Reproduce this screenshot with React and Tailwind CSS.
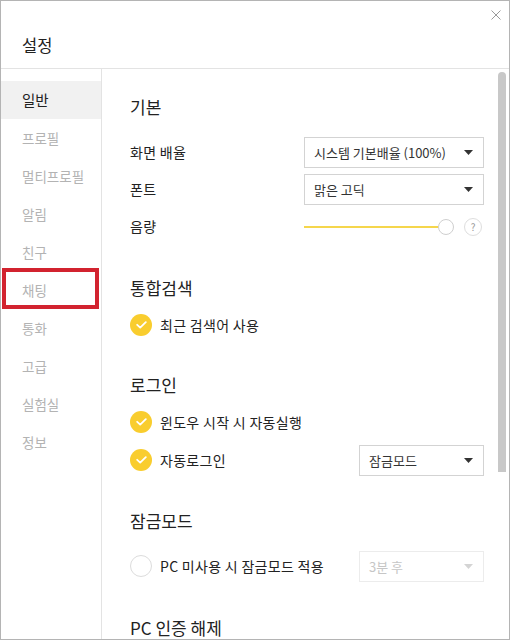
import React from 'react';

const menu = ['일반', '프로필', '멀티프로필', '알림', '친구', '채팅', '통화', '고급', '실험실', '정보'];

const Caret = ({ disabled }) => (
  <svg width="9" height="5" viewBox="0 0 9 5" className="shrink-0">
    <path d="M0 0 L9 0 L4.5 5 Z" fill={disabled ? '#d4d4d4' : '#333333'} />
  </svg>
);

const Select = ({ label, width, disabled }) => (
  <div
    className={`h-[31px] flex items-center justify-between pl-[9px] pr-[10px] border bg-white ${width} ${
      disabled ? 'border-[#ececec] text-[#c6c6c6]' : 'border-[#d3d3d3] text-[#333]'
    }`}
  >
    <span className="text-[13px] leading-none">{label}</span>
    <Caret disabled={disabled} />
  </div>
);

const Check = ({ on }) =>
  on ? (
    <div className="w-[22px] h-[22px] rounded-full bg-[#f9cd2e] flex items-center justify-center shrink-0">
      <svg width="11" height="8" viewBox="0 0 11 8">
        <path d="M1.2 3.8 L4.2 6.6 L9.8 1.2" fill="none" stroke="#ffffff" strokeWidth="1.8" strokeLinecap="round" strokeLinejoin="round" />
      </svg>
    </div>
  ) : (
    <div className="w-[22px] h-[22px] rounded-full border border-[#dcdcdc] bg-white shrink-0" />
  );

const Heading = ({ children, className = '' }) => (
  <div className={`h-[36px] flex items-center text-[17px] text-[#222] ${className}`}>{children}</div>
);

const Label = ({ children }) => (
  <span className="text-[14px] tracking-[0.3px] text-[#222]">{children}</span>
);

const CheckRow = ({ on, label, children }) => (
  <div className="h-[38px] flex items-center justify-between">
    <div className="flex items-center gap-[8px]">
      <Check on={on} />
      <Label>{label}</Label>
    </div>
    {children}
  </div>
);

export default function App() {
  return (
    <div
      className="w-[510px] h-[640px] bg-white border border-[#b4b4b4] flex flex-col overflow-hidden relative"
      style={{ fontFamily: '"Noto Sans CJK KR", "Noto Sans", sans-serif' }}
    >
      <div className="h-[68px] shrink-0 border-b border-[#e3e3e3] flex items-center pl-[21px] pt-[22px]">
        <span className="text-[16.5px] text-[#222]">설정</span>
      </div>
      <button className="absolute top-[9px] right-[8px] w-[10px] h-[10px]">
        <svg width="10" height="10" viewBox="0 0 10 10">
          <path d="M0.5 0.5 L9.5 9.5 M9.5 0.5 L0.5 9.5" stroke="#9a9a9a" strokeWidth="1" />
        </svg>
      </button>

      <div className="flex flex-1 min-h-0">
        <div className="w-[101px] shrink-0 border-r border-[#e3e3e3] pt-[12px]">
          {menu.map((m, i) => (
            <div
              key={m}
              className={`relative h-[38px] flex items-center pl-[21px] text-[13.5px] ${
                i === 0 ? 'bg-[#f1f1f1] text-[#222] text-[14.5px]' : 'text-[#b3b3b3]'
              }`}
            >
              {m}
              {m === '채팅' && (
                <div className="absolute left-[1px] top-[-3px] w-[97px] h-[41px] border-[4px] border-[#d2232f]" />
              )}
            </div>
          ))}
        </div>

        <div className="flex-1 flex min-w-0">
          <div className="flex-1 pl-[28px] pr-[9px] pt-[20px]">
            <Heading className="mb-[9px]">기본</Heading>
            <div className="h-[37px] flex items-center justify-between">
              <Label>화면 배율</Label>
              <Select label="시스템 기본배율 (100%)" width="w-[180px]" />
            </div>
            <div className="h-[37px] flex items-center justify-between">
              <Label>폰트</Label>
              <Select label="맑은 고딕" width="w-[180px]" />
            </div>
            <div className="h-[37px] flex items-center justify-between">
              <Label>음량</Label>
              <div className="w-[180px] flex items-center">
                <div className="w-[135px] h-[2px] bg-[#f5d64c]" />
                <div className="w-[16px] h-[16px] rounded-full border border-[#cfcfcf] bg-white -ml-[1px]" />
                <div className="ml-[10px] w-[18px] h-[18px] rounded-full border border-[#dedede] flex items-center justify-center text-[10px] text-[#999] leading-none">
                  ?
                </div>
              </div>
            </div>

            <Heading className="mt-[25px]">통합검색</Heading>
            <CheckRow on label="최근 검색어 사용" />

            <Heading className="mt-[23px]">로그인</Heading>
            <CheckRow on label="윈도우 시작 시 자동실행" />
            <CheckRow on label="자동로그인">
              <Select label="잠금모드" width="w-[125px]" />
            </CheckRow>

            <Heading className="mt-[24px] mb-[8px]">잠금모드</Heading>
            <CheckRow label="PC 미사용 시 잠금모드 적용">
              <Select label="3분 후" width="w-[125px]" disabled />
            </CheckRow>

            <Heading className="mt-[25px]">PC 인증 해제</Heading>
          </div>
          <div className="w-[16px] shrink-0 pt-[3px] pl-[5px]">
            <div className="w-[8px] h-[400px] bg-[#c8c8c8] rounded-t-full" />
          </div>
        </div>
      </div>
    </div>
  );
}
